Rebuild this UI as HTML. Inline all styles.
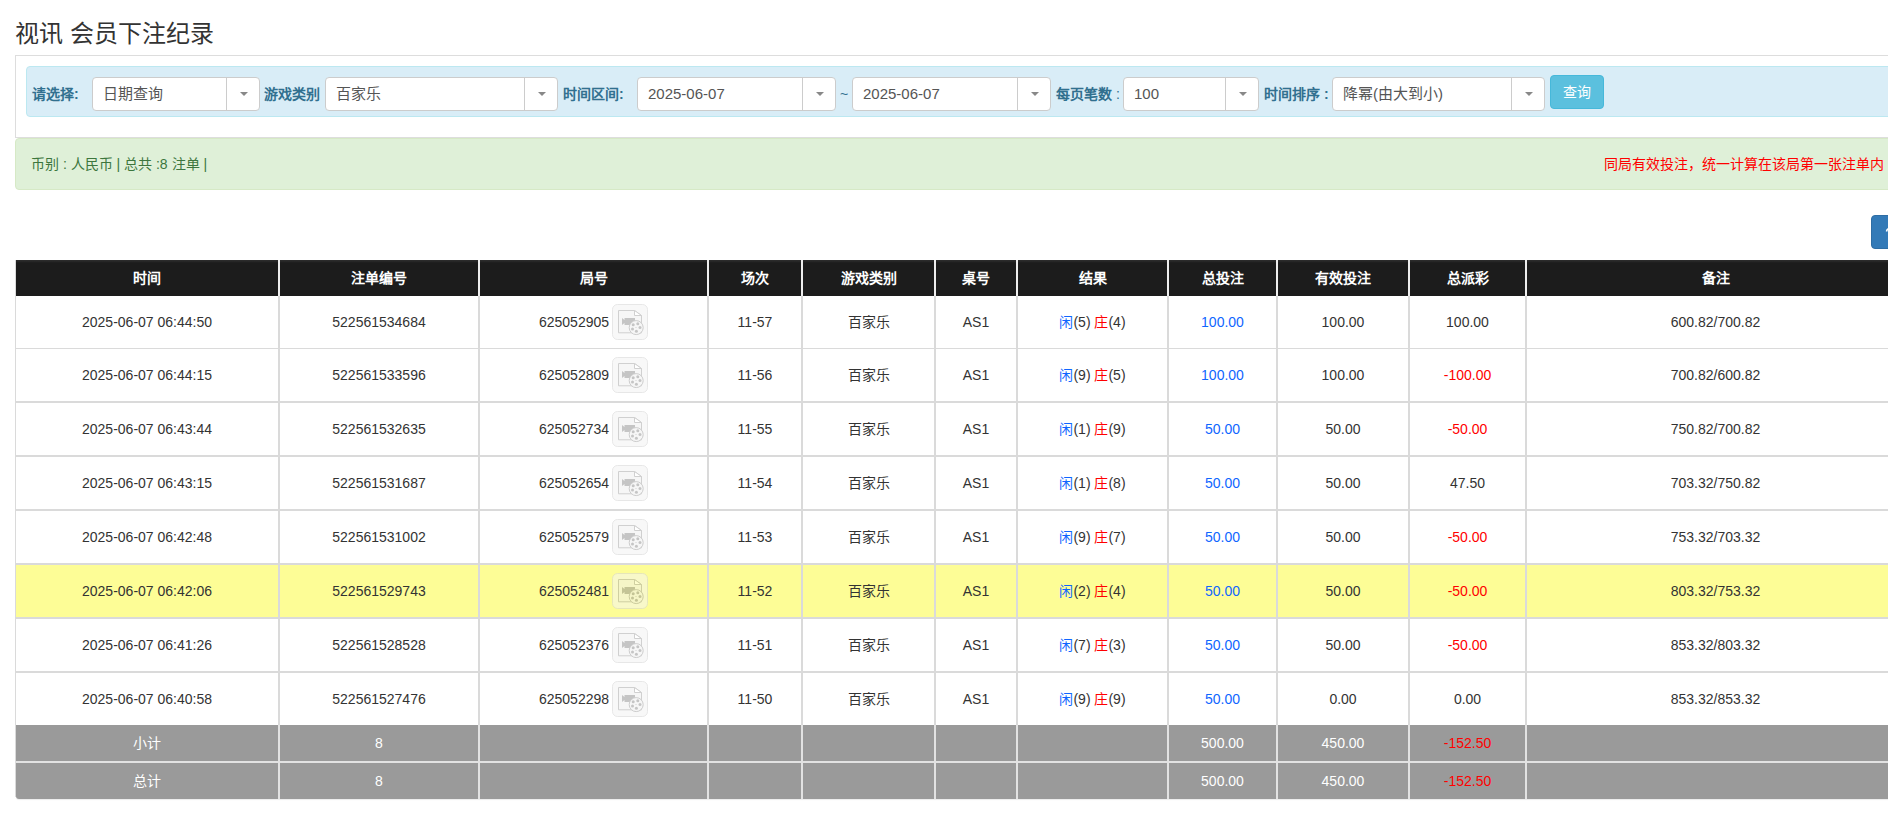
<!DOCTYPE html><html lang="zh-CN"><head><meta charset="utf-8"><style>
*{box-sizing:border-box;margin:0;padding:0}
html,body{width:1888px;height:819px;overflow:hidden;background:#fff}
body{font-family:"Liberation Sans",sans-serif;font-size:14px;color:#333;position:relative}
.abs{position:absolute}
.title{position:absolute;left:15px;top:16px;font-size:24px;line-height:36px;color:#333;white-space:nowrap}
.panel{position:absolute;left:15px;top:55px;width:1900px;height:83px;border:1px solid #ddd}
.ainfo{position:absolute;left:26px;top:66px;width:1900px;height:51px;background:#d9edf7;border:1px solid #bce8f1;border-radius:4px}
.lbl{position:absolute;top:84px;line-height:20px;font-weight:bold;color:#31708f;font-size:14px;white-space:nowrap}
.sel{position:absolute;top:77px;height:34px;background:#fff;border:1px solid #ccc;border-radius:4px}
.sel .t{position:absolute;left:10px;top:0;line-height:32px;font-size:15px;color:#555;white-space:nowrap}
.sel .dv{position:absolute;right:32px;top:0;width:1px;height:32px;background:#ccc}
.sel .ar{position:absolute;right:11px;top:14px;width:0;height:0;border-left:4px solid transparent;border-right:4px solid transparent;border-top:4px solid #888}
.btn{position:absolute;left:1550px;top:75px;width:54px;height:34px;background:#5bc0de;border:1px solid #46b8da;border-radius:4px;color:#fff;text-align:center;line-height:32px;font-size:14px}
.asucc{position:absolute;left:15px;top:138px;width:1900px;height:52px;background:#dff0d8;border:1px solid #d6e9c6;border-radius:4px}
.gtxt{position:absolute;left:31px;top:154px;line-height:20px;font-size:14px;color:#3c763d;white-space:nowrap}
.rtxt{position:absolute;right:4px;top:154px;line-height:20px;font-size:14px;color:#f00;white-space:nowrap}
.pbtn{position:absolute;left:1871px;top:215px;width:60px;height:34px;background:#337ab7;border:1px solid #2e6da4;border-radius:4px;color:#fff;line-height:32px;padding-left:12px;font-size:14px;white-space:nowrap}
.rowbg{position:absolute;left:16px;width:1888px}
.hd{background:linear-gradient(#2b2b2b 0,#2b2b2b 1px,#222 2px,#1c1c1c 3px,#1c1c1c 100%)}
.vl{position:absolute;width:2px}
.hl{position:absolute;left:15px;width:1889px;background:#dadada}
.c{position:absolute;text-align:center;white-space:nowrap;font-size:14px}
.th{color:#fff;font-weight:bold}
.b{color:#0f66ff}
.r{color:#f00}
.ic{vertical-align:middle;margin-left:3px;position:relative;top:-1px}
.ft{color:#fff}
</style></head><body>
<div class="title">视讯 会员下注纪录</div>
<div class="panel"></div>
<div class="ainfo"></div>
<div class="lbl" style="left:32px">请选择:</div>
<div class="lbl" style="left:264px">游戏类别</div>
<div class="lbl" style="left:563px">时间区间:</div>
<div class="lbl" style="left:840px;font-weight:normal">~</div>
<div class="lbl" style="left:1056px">每页笔数 <span style="font-weight:normal">:</span></div>
<div class="lbl" style="left:1264px">时间排序 :</div>
<div class="sel" style="left:92px;width:168px"><div class="t">日期查询</div><div class="dv"></div><div class="ar"></div></div>
<div class="sel" style="left:325px;width:233px"><div class="t">百家乐</div><div class="dv"></div><div class="ar"></div></div>
<div class="sel" style="left:637px;width:199px"><div class="t">2025-06-07</div><div class="dv"></div><div class="ar"></div></div>
<div class="sel" style="left:852px;width:199px"><div class="t">2025-06-07</div><div class="dv"></div><div class="ar"></div></div>
<div class="sel" style="left:1123px;width:136px"><div class="t">100</div><div class="dv"></div><div class="ar"></div></div>
<div class="sel" style="left:1332px;width:213px"><div class="t">降幂(由大到小)</div><div class="dv"></div><div class="ar"></div></div>
<div class="btn">查询</div>
<div class="asucc"></div>
<div class="gtxt">币别 : 人民币 | 总共 :8 注单 |</div>
<div class="rtxt">同局有效投注，统一计算在该局第一张注单内</div>
<div class="pbtn"><svg style="position:absolute;left:12px;top:10px" width="8" height="10"><path d="M2.5 5.5 Q3 2.5 6 2.5" stroke="#fff" stroke-width="1.6" fill="none"/></svg></div>
<div class="rowbg hd" style="top:260px;height:36px"></div>
<div class="rowbg" style="top:296px;height:52px;background:#fff"></div>
<div class="rowbg" style="top:349px;height:52px;background:#fff"></div>
<div class="rowbg" style="top:403px;height:52px;background:#fff"></div>
<div class="rowbg" style="top:457px;height:52px;background:#fff"></div>
<div class="rowbg" style="top:511px;height:52px;background:#fff"></div>
<div class="rowbg" style="top:565px;height:52px;background:#fdfd96"></div>
<div class="rowbg" style="top:619px;height:52px;background:#fff"></div>
<div class="rowbg" style="top:673px;height:52px;background:#fff"></div>
<div class="rowbg" style="top:725px;height:74px;background:#9a9a9a;border-bottom-left-radius:3px;box-shadow:0 1px 1px rgba(0,0,0,.08)"></div>
<div class="hl" style="top:348px;height:1px"></div>
<div class="hl" style="top:401px;height:2px"></div>
<div class="hl" style="top:455px;height:2px"></div>
<div class="hl" style="top:509px;height:2px"></div>
<div class="hl" style="top:563px;height:2px"></div>
<div class="hl" style="top:617px;height:2px"></div>
<div class="hl" style="top:671px;height:2px"></div>
<div class="hl" style="top:761px;height:2px;background:#e2e2e2"></div>
<div class="vl" style="left:15px;top:260px;height:537px;width:1px;background:#dadada"></div>
<div class="vl" style="left:278px;top:260px;height:36px;background:#eeeeee"></div>
<div class="vl" style="left:278px;top:296px;height:429px;background:#dadada"></div>
<div class="vl" style="left:278px;top:725px;height:74px;background:#e2e2e2"></div>
<div class="vl" style="left:478px;top:260px;height:36px;background:#eeeeee"></div>
<div class="vl" style="left:478px;top:296px;height:429px;background:#dadada"></div>
<div class="vl" style="left:478px;top:725px;height:74px;background:#e2e2e2"></div>
<div class="vl" style="left:707px;top:260px;height:36px;background:#eeeeee"></div>
<div class="vl" style="left:707px;top:296px;height:429px;background:#dadada"></div>
<div class="vl" style="left:707px;top:725px;height:74px;background:#e2e2e2"></div>
<div class="vl" style="left:801px;top:260px;height:36px;background:#eeeeee"></div>
<div class="vl" style="left:801px;top:296px;height:429px;background:#dadada"></div>
<div class="vl" style="left:801px;top:725px;height:74px;background:#e2e2e2"></div>
<div class="vl" style="left:934px;top:260px;height:36px;background:#eeeeee"></div>
<div class="vl" style="left:934px;top:296px;height:429px;background:#dadada"></div>
<div class="vl" style="left:934px;top:725px;height:74px;background:#e2e2e2"></div>
<div class="vl" style="left:1016px;top:260px;height:36px;background:#eeeeee"></div>
<div class="vl" style="left:1016px;top:296px;height:429px;background:#dadada"></div>
<div class="vl" style="left:1016px;top:725px;height:74px;background:#e2e2e2"></div>
<div class="vl" style="left:1167px;top:260px;height:36px;background:#eeeeee"></div>
<div class="vl" style="left:1167px;top:296px;height:429px;background:#dadada"></div>
<div class="vl" style="left:1167px;top:725px;height:74px;background:#e2e2e2"></div>
<div class="vl" style="left:1276px;top:260px;height:36px;background:#eeeeee"></div>
<div class="vl" style="left:1276px;top:296px;height:429px;background:#dadada"></div>
<div class="vl" style="left:1276px;top:725px;height:74px;background:#e2e2e2"></div>
<div class="vl" style="left:1408px;top:260px;height:36px;background:#eeeeee"></div>
<div class="vl" style="left:1408px;top:296px;height:429px;background:#dadada"></div>
<div class="vl" style="left:1408px;top:725px;height:74px;background:#e2e2e2"></div>
<div class="vl" style="left:1525px;top:260px;height:36px;background:#eeeeee"></div>
<div class="vl" style="left:1525px;top:296px;height:429px;background:#dadada"></div>
<div class="vl" style="left:1525px;top:725px;height:74px;background:#e2e2e2"></div>
<div class="c th" style="left:16px;width:262px;top:260px;height:36px;line-height:36px">时间</div>
<div class="c th" style="left:280px;width:198px;top:260px;height:36px;line-height:36px">注单编号</div>
<div class="c th" style="left:480px;width:227px;top:260px;height:36px;line-height:36px">局号</div>
<div class="c th" style="left:709px;width:92px;top:260px;height:36px;line-height:36px">场次</div>
<div class="c th" style="left:803px;width:131px;top:260px;height:36px;line-height:36px">游戏类别</div>
<div class="c th" style="left:936px;width:80px;top:260px;height:36px;line-height:36px">桌号</div>
<div class="c th" style="left:1018px;width:149px;top:260px;height:36px;line-height:36px">结果</div>
<div class="c th" style="left:1169px;width:107px;top:260px;height:36px;line-height:36px">总投注</div>
<div class="c th" style="left:1278px;width:130px;top:260px;height:36px;line-height:36px">有效投注</div>
<div class="c th" style="left:1410px;width:115px;top:260px;height:36px;line-height:36px">总派彩</div>
<div class="c th" style="left:1527px;width:377px;top:260px;height:36px;line-height:36px">备注</div>
<div class="c" style="left:16px;width:262px;top:296px;height:52px;line-height:52px">2025-06-07 06:44:50</div>
<div class="c" style="left:280px;width:198px;top:296px;height:52px;line-height:52px">522561534684</div>
<div class="c" style="left:480px;width:227px;top:296px;height:52px;line-height:52px">625052905<svg class="ic" opacity="0.55" width="36" height="36" viewBox="0 0 36 36"><rect x="0.5" y="0.5" width="35" height="35" rx="5" fill="#f4f4f4" stroke="#d5d5d5"/><path d="M6.5 6.5 H22.5 L29.5 11.5 V28.8 H6.5 Z" fill="#f0f0f0" stroke="#aaaaaa"/><path d="M22.5 6.5 L29.5 11.5 H22.5 Z" fill="#ffffff" stroke="#aaaaaa"/><path d="M10 14 L12.5 16 V14 H23 V21 H12.5 V19 L10 21 Z" fill="#979797"/><circle cx="24.2" cy="23.6" r="7" fill="#f0f0f0" stroke="#a4a4a4"/><g fill="#979797"><circle cx="21.2" cy="20.8" r="1.5"/><circle cx="25.8" cy="19.8" r="1.5"/><circle cx="28" cy="23.5" r="1.5"/><circle cx="24.4" cy="27.3" r="1.5"/><circle cx="20.5" cy="25.1" r="1.5"/><circle cx="24" cy="23.5" r="0.5"/></g></svg></div>
<div class="c" style="left:709px;width:92px;top:296px;height:52px;line-height:52px">11-57</div>
<div class="c" style="left:803px;width:131px;top:296px;height:52px;line-height:52px">百家乐</div>
<div class="c" style="left:936px;width:80px;top:296px;height:52px;line-height:52px">AS1</div>
<div class="c" style="left:1018px;width:149px;top:296px;height:52px;line-height:52px"><span class="b">闲</span>(5) <span class="r">庄</span>(4)</div>
<div class="c" style="left:1169px;width:107px;top:296px;height:52px;line-height:52px"><span class="b">100.00</span></div>
<div class="c" style="left:1278px;width:130px;top:296px;height:52px;line-height:52px">100.00</div>
<div class="c" style="left:1410px;width:115px;top:296px;height:52px;line-height:52px">100.00</div>
<div class="c" style="left:1527px;width:377px;top:296px;height:52px;line-height:52px">600.82/700.82</div>
<div class="c" style="left:16px;width:262px;top:349px;height:52px;line-height:52px">2025-06-07 06:44:15</div>
<div class="c" style="left:280px;width:198px;top:349px;height:52px;line-height:52px">522561533596</div>
<div class="c" style="left:480px;width:227px;top:349px;height:52px;line-height:52px">625052809<svg class="ic" opacity="0.55" width="36" height="36" viewBox="0 0 36 36"><rect x="0.5" y="0.5" width="35" height="35" rx="5" fill="#f4f4f4" stroke="#d5d5d5"/><path d="M6.5 6.5 H22.5 L29.5 11.5 V28.8 H6.5 Z" fill="#f0f0f0" stroke="#aaaaaa"/><path d="M22.5 6.5 L29.5 11.5 H22.5 Z" fill="#ffffff" stroke="#aaaaaa"/><path d="M10 14 L12.5 16 V14 H23 V21 H12.5 V19 L10 21 Z" fill="#979797"/><circle cx="24.2" cy="23.6" r="7" fill="#f0f0f0" stroke="#a4a4a4"/><g fill="#979797"><circle cx="21.2" cy="20.8" r="1.5"/><circle cx="25.8" cy="19.8" r="1.5"/><circle cx="28" cy="23.5" r="1.5"/><circle cx="24.4" cy="27.3" r="1.5"/><circle cx="20.5" cy="25.1" r="1.5"/><circle cx="24" cy="23.5" r="0.5"/></g></svg></div>
<div class="c" style="left:709px;width:92px;top:349px;height:52px;line-height:52px">11-56</div>
<div class="c" style="left:803px;width:131px;top:349px;height:52px;line-height:52px">百家乐</div>
<div class="c" style="left:936px;width:80px;top:349px;height:52px;line-height:52px">AS1</div>
<div class="c" style="left:1018px;width:149px;top:349px;height:52px;line-height:52px"><span class="b">闲</span>(9) <span class="r">庄</span>(5)</div>
<div class="c" style="left:1169px;width:107px;top:349px;height:52px;line-height:52px"><span class="b">100.00</span></div>
<div class="c" style="left:1278px;width:130px;top:349px;height:52px;line-height:52px">100.00</div>
<div class="c" style="left:1410px;width:115px;top:349px;height:52px;line-height:52px"><span class="r">-100.00</span></div>
<div class="c" style="left:1527px;width:377px;top:349px;height:52px;line-height:52px">700.82/600.82</div>
<div class="c" style="left:16px;width:262px;top:403px;height:52px;line-height:52px">2025-06-07 06:43:44</div>
<div class="c" style="left:280px;width:198px;top:403px;height:52px;line-height:52px">522561532635</div>
<div class="c" style="left:480px;width:227px;top:403px;height:52px;line-height:52px">625052734<svg class="ic" opacity="0.55" width="36" height="36" viewBox="0 0 36 36"><rect x="0.5" y="0.5" width="35" height="35" rx="5" fill="#f4f4f4" stroke="#d5d5d5"/><path d="M6.5 6.5 H22.5 L29.5 11.5 V28.8 H6.5 Z" fill="#f0f0f0" stroke="#aaaaaa"/><path d="M22.5 6.5 L29.5 11.5 H22.5 Z" fill="#ffffff" stroke="#aaaaaa"/><path d="M10 14 L12.5 16 V14 H23 V21 H12.5 V19 L10 21 Z" fill="#979797"/><circle cx="24.2" cy="23.6" r="7" fill="#f0f0f0" stroke="#a4a4a4"/><g fill="#979797"><circle cx="21.2" cy="20.8" r="1.5"/><circle cx="25.8" cy="19.8" r="1.5"/><circle cx="28" cy="23.5" r="1.5"/><circle cx="24.4" cy="27.3" r="1.5"/><circle cx="20.5" cy="25.1" r="1.5"/><circle cx="24" cy="23.5" r="0.5"/></g></svg></div>
<div class="c" style="left:709px;width:92px;top:403px;height:52px;line-height:52px">11-55</div>
<div class="c" style="left:803px;width:131px;top:403px;height:52px;line-height:52px">百家乐</div>
<div class="c" style="left:936px;width:80px;top:403px;height:52px;line-height:52px">AS1</div>
<div class="c" style="left:1018px;width:149px;top:403px;height:52px;line-height:52px"><span class="b">闲</span>(1) <span class="r">庄</span>(9)</div>
<div class="c" style="left:1169px;width:107px;top:403px;height:52px;line-height:52px"><span class="b">50.00</span></div>
<div class="c" style="left:1278px;width:130px;top:403px;height:52px;line-height:52px">50.00</div>
<div class="c" style="left:1410px;width:115px;top:403px;height:52px;line-height:52px"><span class="r">-50.00</span></div>
<div class="c" style="left:1527px;width:377px;top:403px;height:52px;line-height:52px">750.82/700.82</div>
<div class="c" style="left:16px;width:262px;top:457px;height:52px;line-height:52px">2025-06-07 06:43:15</div>
<div class="c" style="left:280px;width:198px;top:457px;height:52px;line-height:52px">522561531687</div>
<div class="c" style="left:480px;width:227px;top:457px;height:52px;line-height:52px">625052654<svg class="ic" opacity="0.55" width="36" height="36" viewBox="0 0 36 36"><rect x="0.5" y="0.5" width="35" height="35" rx="5" fill="#f4f4f4" stroke="#d5d5d5"/><path d="M6.5 6.5 H22.5 L29.5 11.5 V28.8 H6.5 Z" fill="#f0f0f0" stroke="#aaaaaa"/><path d="M22.5 6.5 L29.5 11.5 H22.5 Z" fill="#ffffff" stroke="#aaaaaa"/><path d="M10 14 L12.5 16 V14 H23 V21 H12.5 V19 L10 21 Z" fill="#979797"/><circle cx="24.2" cy="23.6" r="7" fill="#f0f0f0" stroke="#a4a4a4"/><g fill="#979797"><circle cx="21.2" cy="20.8" r="1.5"/><circle cx="25.8" cy="19.8" r="1.5"/><circle cx="28" cy="23.5" r="1.5"/><circle cx="24.4" cy="27.3" r="1.5"/><circle cx="20.5" cy="25.1" r="1.5"/><circle cx="24" cy="23.5" r="0.5"/></g></svg></div>
<div class="c" style="left:709px;width:92px;top:457px;height:52px;line-height:52px">11-54</div>
<div class="c" style="left:803px;width:131px;top:457px;height:52px;line-height:52px">百家乐</div>
<div class="c" style="left:936px;width:80px;top:457px;height:52px;line-height:52px">AS1</div>
<div class="c" style="left:1018px;width:149px;top:457px;height:52px;line-height:52px"><span class="b">闲</span>(1) <span class="r">庄</span>(8)</div>
<div class="c" style="left:1169px;width:107px;top:457px;height:52px;line-height:52px"><span class="b">50.00</span></div>
<div class="c" style="left:1278px;width:130px;top:457px;height:52px;line-height:52px">50.00</div>
<div class="c" style="left:1410px;width:115px;top:457px;height:52px;line-height:52px">47.50</div>
<div class="c" style="left:1527px;width:377px;top:457px;height:52px;line-height:52px">703.32/750.82</div>
<div class="c" style="left:16px;width:262px;top:511px;height:52px;line-height:52px">2025-06-07 06:42:48</div>
<div class="c" style="left:280px;width:198px;top:511px;height:52px;line-height:52px">522561531002</div>
<div class="c" style="left:480px;width:227px;top:511px;height:52px;line-height:52px">625052579<svg class="ic" opacity="0.55" width="36" height="36" viewBox="0 0 36 36"><rect x="0.5" y="0.5" width="35" height="35" rx="5" fill="#f4f4f4" stroke="#d5d5d5"/><path d="M6.5 6.5 H22.5 L29.5 11.5 V28.8 H6.5 Z" fill="#f0f0f0" stroke="#aaaaaa"/><path d="M22.5 6.5 L29.5 11.5 H22.5 Z" fill="#ffffff" stroke="#aaaaaa"/><path d="M10 14 L12.5 16 V14 H23 V21 H12.5 V19 L10 21 Z" fill="#979797"/><circle cx="24.2" cy="23.6" r="7" fill="#f0f0f0" stroke="#a4a4a4"/><g fill="#979797"><circle cx="21.2" cy="20.8" r="1.5"/><circle cx="25.8" cy="19.8" r="1.5"/><circle cx="28" cy="23.5" r="1.5"/><circle cx="24.4" cy="27.3" r="1.5"/><circle cx="20.5" cy="25.1" r="1.5"/><circle cx="24" cy="23.5" r="0.5"/></g></svg></div>
<div class="c" style="left:709px;width:92px;top:511px;height:52px;line-height:52px">11-53</div>
<div class="c" style="left:803px;width:131px;top:511px;height:52px;line-height:52px">百家乐</div>
<div class="c" style="left:936px;width:80px;top:511px;height:52px;line-height:52px">AS1</div>
<div class="c" style="left:1018px;width:149px;top:511px;height:52px;line-height:52px"><span class="b">闲</span>(9) <span class="r">庄</span>(7)</div>
<div class="c" style="left:1169px;width:107px;top:511px;height:52px;line-height:52px"><span class="b">50.00</span></div>
<div class="c" style="left:1278px;width:130px;top:511px;height:52px;line-height:52px">50.00</div>
<div class="c" style="left:1410px;width:115px;top:511px;height:52px;line-height:52px"><span class="r">-50.00</span></div>
<div class="c" style="left:1527px;width:377px;top:511px;height:52px;line-height:52px">753.32/703.32</div>
<div class="c" style="left:16px;width:262px;top:565px;height:52px;line-height:52px">2025-06-07 06:42:06</div>
<div class="c" style="left:280px;width:198px;top:565px;height:52px;line-height:52px">522561529743</div>
<div class="c" style="left:480px;width:227px;top:565px;height:52px;line-height:52px">625052481<svg class="ic" opacity="0.55" width="36" height="36" viewBox="0 0 36 36"><rect x="0.5" y="0.5" width="35" height="35" rx="5" fill="#f4f4f4" stroke="#d5d5d5"/><path d="M6.5 6.5 H22.5 L29.5 11.5 V28.8 H6.5 Z" fill="#f0f0f0" stroke="#aaaaaa"/><path d="M22.5 6.5 L29.5 11.5 H22.5 Z" fill="#ffffff" stroke="#aaaaaa"/><path d="M10 14 L12.5 16 V14 H23 V21 H12.5 V19 L10 21 Z" fill="#979797"/><circle cx="24.2" cy="23.6" r="7" fill="#f0f0f0" stroke="#a4a4a4"/><g fill="#979797"><circle cx="21.2" cy="20.8" r="1.5"/><circle cx="25.8" cy="19.8" r="1.5"/><circle cx="28" cy="23.5" r="1.5"/><circle cx="24.4" cy="27.3" r="1.5"/><circle cx="20.5" cy="25.1" r="1.5"/><circle cx="24" cy="23.5" r="0.5"/></g></svg></div>
<div class="c" style="left:709px;width:92px;top:565px;height:52px;line-height:52px">11-52</div>
<div class="c" style="left:803px;width:131px;top:565px;height:52px;line-height:52px">百家乐</div>
<div class="c" style="left:936px;width:80px;top:565px;height:52px;line-height:52px">AS1</div>
<div class="c" style="left:1018px;width:149px;top:565px;height:52px;line-height:52px"><span class="b">闲</span>(2) <span class="r">庄</span>(4)</div>
<div class="c" style="left:1169px;width:107px;top:565px;height:52px;line-height:52px"><span class="b">50.00</span></div>
<div class="c" style="left:1278px;width:130px;top:565px;height:52px;line-height:52px">50.00</div>
<div class="c" style="left:1410px;width:115px;top:565px;height:52px;line-height:52px"><span class="r">-50.00</span></div>
<div class="c" style="left:1527px;width:377px;top:565px;height:52px;line-height:52px">803.32/753.32</div>
<div class="c" style="left:16px;width:262px;top:619px;height:52px;line-height:52px">2025-06-07 06:41:26</div>
<div class="c" style="left:280px;width:198px;top:619px;height:52px;line-height:52px">522561528528</div>
<div class="c" style="left:480px;width:227px;top:619px;height:52px;line-height:52px">625052376<svg class="ic" opacity="0.55" width="36" height="36" viewBox="0 0 36 36"><rect x="0.5" y="0.5" width="35" height="35" rx="5" fill="#f4f4f4" stroke="#d5d5d5"/><path d="M6.5 6.5 H22.5 L29.5 11.5 V28.8 H6.5 Z" fill="#f0f0f0" stroke="#aaaaaa"/><path d="M22.5 6.5 L29.5 11.5 H22.5 Z" fill="#ffffff" stroke="#aaaaaa"/><path d="M10 14 L12.5 16 V14 H23 V21 H12.5 V19 L10 21 Z" fill="#979797"/><circle cx="24.2" cy="23.6" r="7" fill="#f0f0f0" stroke="#a4a4a4"/><g fill="#979797"><circle cx="21.2" cy="20.8" r="1.5"/><circle cx="25.8" cy="19.8" r="1.5"/><circle cx="28" cy="23.5" r="1.5"/><circle cx="24.4" cy="27.3" r="1.5"/><circle cx="20.5" cy="25.1" r="1.5"/><circle cx="24" cy="23.5" r="0.5"/></g></svg></div>
<div class="c" style="left:709px;width:92px;top:619px;height:52px;line-height:52px">11-51</div>
<div class="c" style="left:803px;width:131px;top:619px;height:52px;line-height:52px">百家乐</div>
<div class="c" style="left:936px;width:80px;top:619px;height:52px;line-height:52px">AS1</div>
<div class="c" style="left:1018px;width:149px;top:619px;height:52px;line-height:52px"><span class="b">闲</span>(7) <span class="r">庄</span>(3)</div>
<div class="c" style="left:1169px;width:107px;top:619px;height:52px;line-height:52px"><span class="b">50.00</span></div>
<div class="c" style="left:1278px;width:130px;top:619px;height:52px;line-height:52px">50.00</div>
<div class="c" style="left:1410px;width:115px;top:619px;height:52px;line-height:52px"><span class="r">-50.00</span></div>
<div class="c" style="left:1527px;width:377px;top:619px;height:52px;line-height:52px">853.32/803.32</div>
<div class="c" style="left:16px;width:262px;top:673px;height:52px;line-height:52px">2025-06-07 06:40:58</div>
<div class="c" style="left:280px;width:198px;top:673px;height:52px;line-height:52px">522561527476</div>
<div class="c" style="left:480px;width:227px;top:673px;height:52px;line-height:52px">625052298<svg class="ic" opacity="0.55" width="36" height="36" viewBox="0 0 36 36"><rect x="0.5" y="0.5" width="35" height="35" rx="5" fill="#f4f4f4" stroke="#d5d5d5"/><path d="M6.5 6.5 H22.5 L29.5 11.5 V28.8 H6.5 Z" fill="#f0f0f0" stroke="#aaaaaa"/><path d="M22.5 6.5 L29.5 11.5 H22.5 Z" fill="#ffffff" stroke="#aaaaaa"/><path d="M10 14 L12.5 16 V14 H23 V21 H12.5 V19 L10 21 Z" fill="#979797"/><circle cx="24.2" cy="23.6" r="7" fill="#f0f0f0" stroke="#a4a4a4"/><g fill="#979797"><circle cx="21.2" cy="20.8" r="1.5"/><circle cx="25.8" cy="19.8" r="1.5"/><circle cx="28" cy="23.5" r="1.5"/><circle cx="24.4" cy="27.3" r="1.5"/><circle cx="20.5" cy="25.1" r="1.5"/><circle cx="24" cy="23.5" r="0.5"/></g></svg></div>
<div class="c" style="left:709px;width:92px;top:673px;height:52px;line-height:52px">11-50</div>
<div class="c" style="left:803px;width:131px;top:673px;height:52px;line-height:52px">百家乐</div>
<div class="c" style="left:936px;width:80px;top:673px;height:52px;line-height:52px">AS1</div>
<div class="c" style="left:1018px;width:149px;top:673px;height:52px;line-height:52px"><span class="b">闲</span>(9) <span class="r">庄</span>(9)</div>
<div class="c" style="left:1169px;width:107px;top:673px;height:52px;line-height:52px"><span class="b">50.00</span></div>
<div class="c" style="left:1278px;width:130px;top:673px;height:52px;line-height:52px">0.00</div>
<div class="c" style="left:1410px;width:115px;top:673px;height:52px;line-height:52px">0.00</div>
<div class="c" style="left:1527px;width:377px;top:673px;height:52px;line-height:52px">853.32/853.32</div>
<div class="c ft" style="left:16px;width:262px;top:725px;height:36px;line-height:36px">小计</div>
<div class="c ft" style="left:280px;width:198px;top:725px;height:36px;line-height:36px">8</div>
<div class="c ft" style="left:1169px;width:107px;top:725px;height:36px;line-height:36px">500.00</div>
<div class="c ft" style="left:1278px;width:130px;top:725px;height:36px;line-height:36px">450.00</div>
<div class="c ft" style="left:1410px;width:115px;top:725px;height:36px;line-height:36px"><span class="r">-152.50</span></div>
<div class="c ft" style="left:16px;width:262px;top:763px;height:36px;line-height:36px">总计</div>
<div class="c ft" style="left:280px;width:198px;top:763px;height:36px;line-height:36px">8</div>
<div class="c ft" style="left:1169px;width:107px;top:763px;height:36px;line-height:36px">500.00</div>
<div class="c ft" style="left:1278px;width:130px;top:763px;height:36px;line-height:36px">450.00</div>
<div class="c ft" style="left:1410px;width:115px;top:763px;height:36px;line-height:36px"><span class="r">-152.50</span></div>
</body></html>
